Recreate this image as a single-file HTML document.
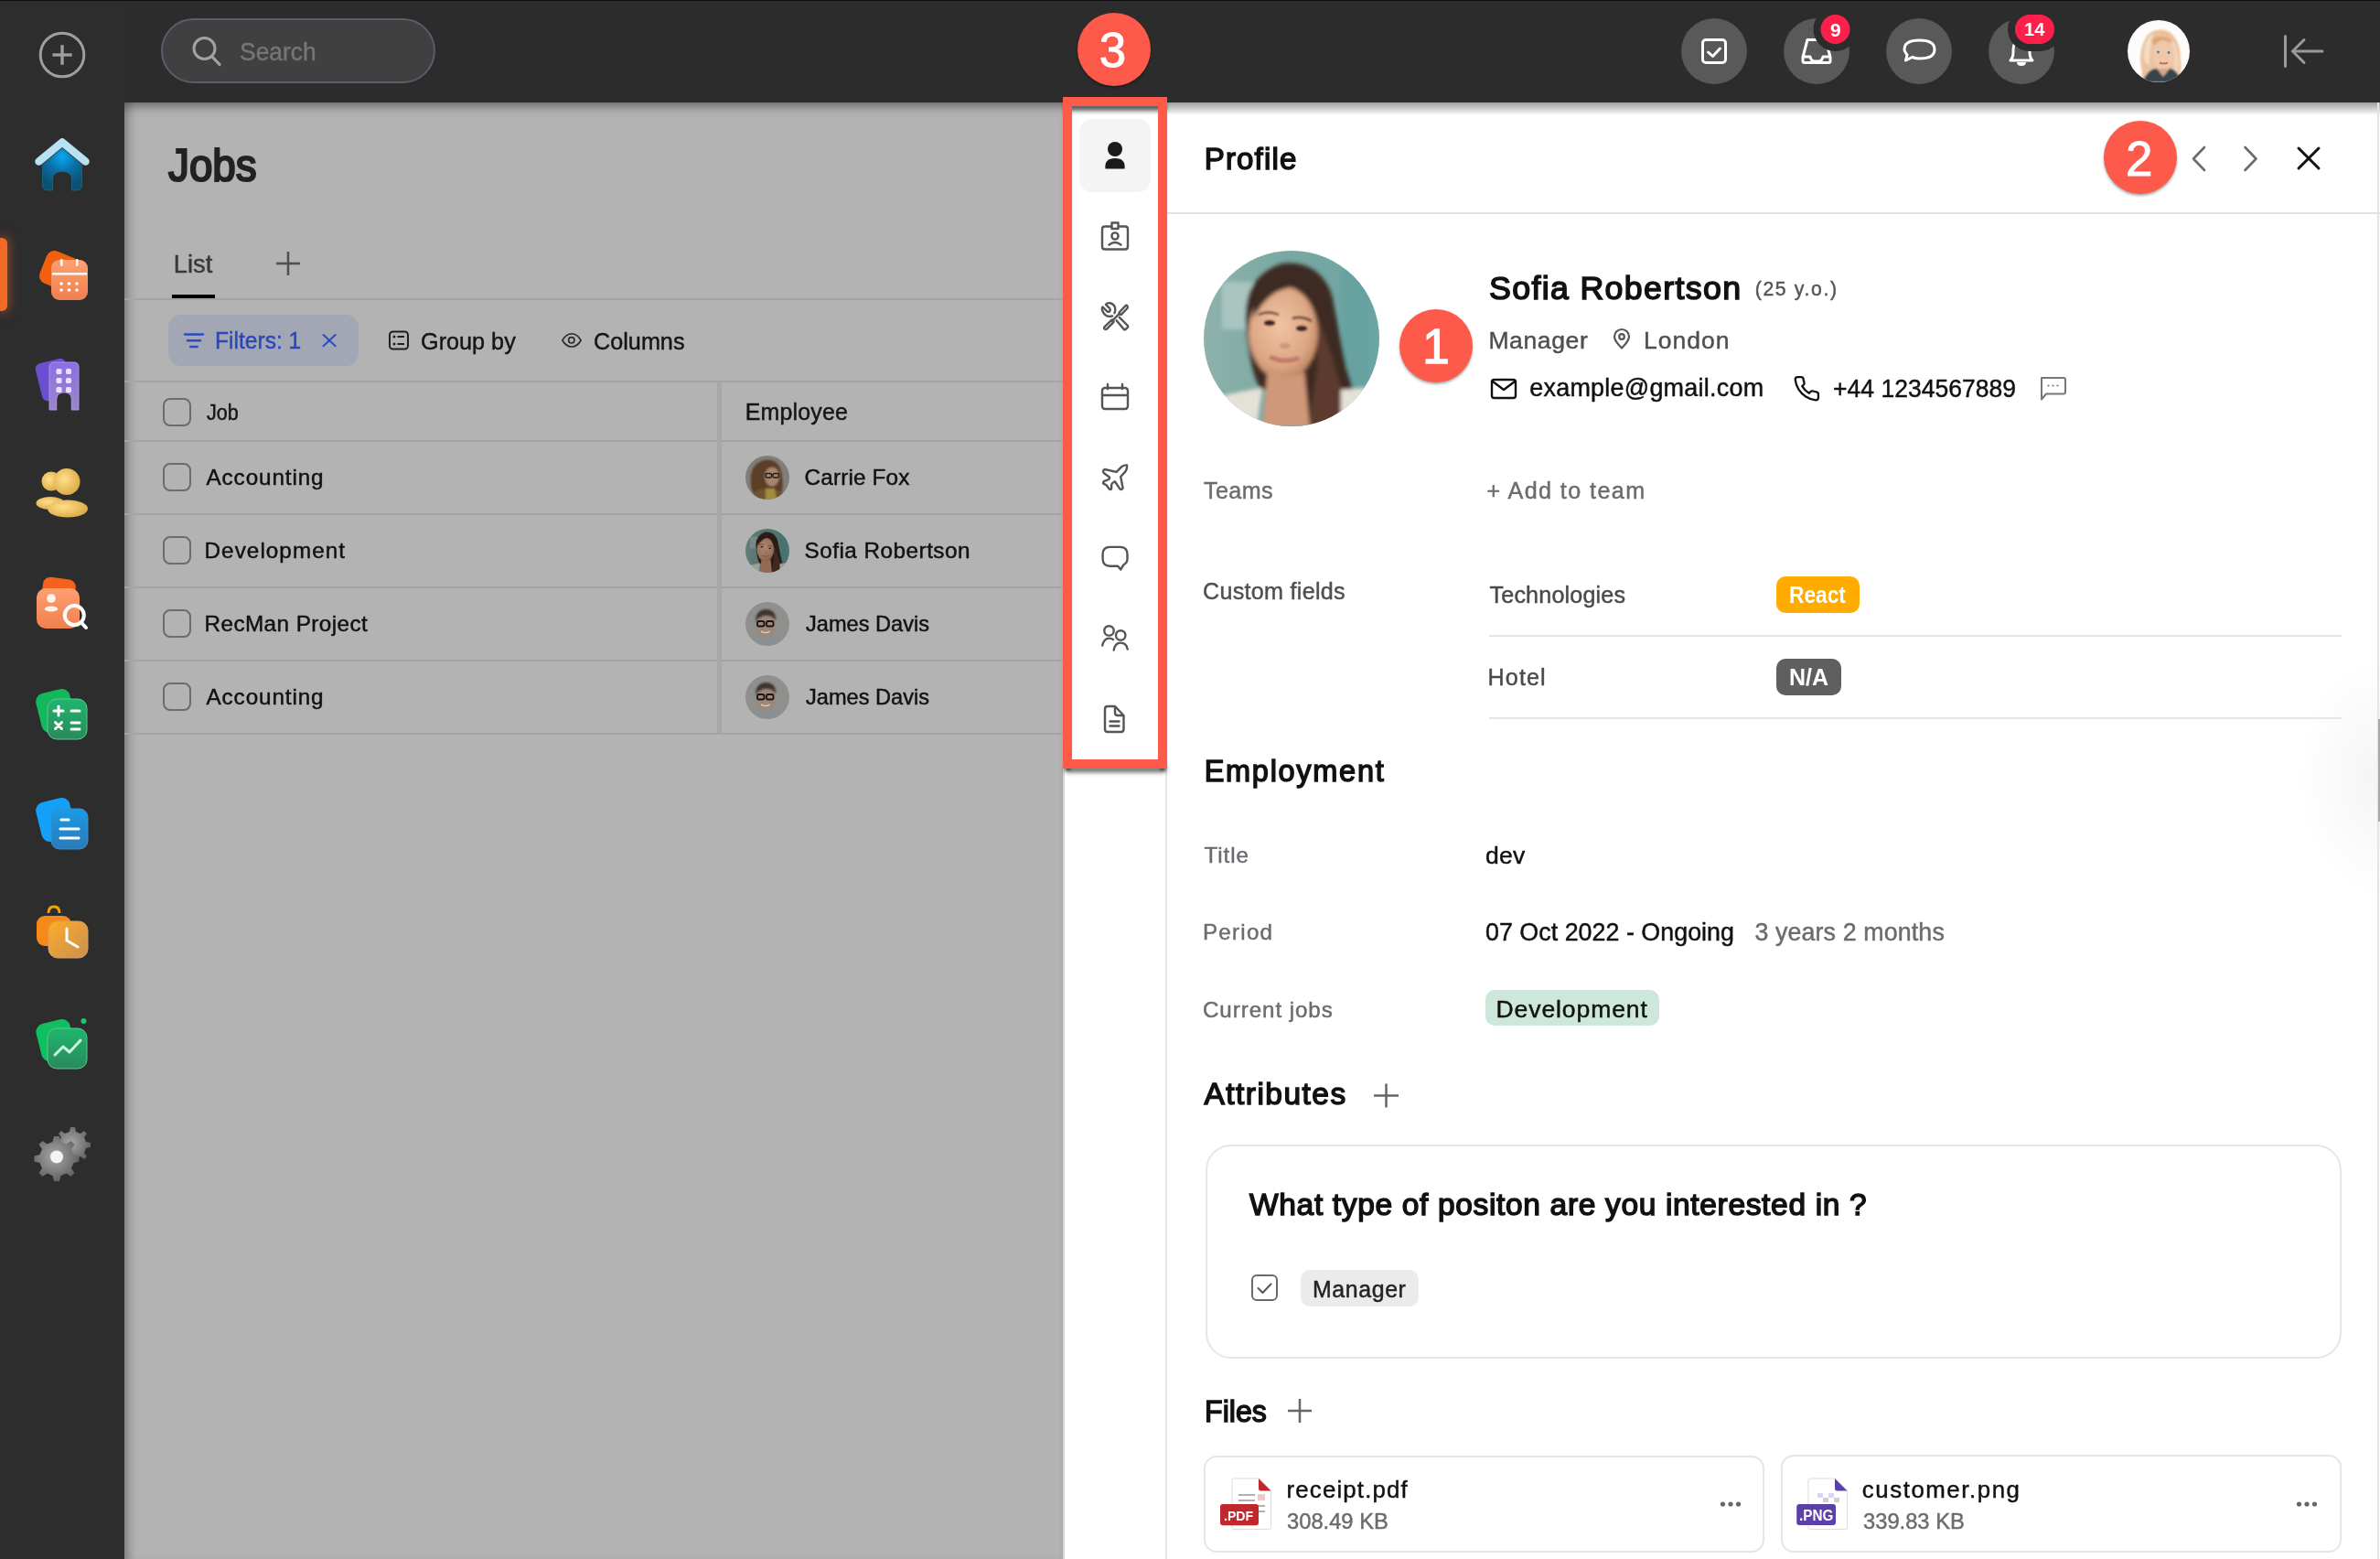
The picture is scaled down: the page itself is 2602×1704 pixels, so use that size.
<!DOCTYPE html>
<html><head><meta charset="utf-8">
<style>
html,body{margin:0;padding:0;width:2602px;height:1704px;overflow:hidden;background:#fff;font-family:"Liberation Sans",sans-serif;}
.a{position:absolute;box-sizing:border-box;}
.t{position:absolute;white-space:pre;font-family:"Liberation Sans",sans-serif;}
svg{position:absolute;overflow:visible;}
</style></head><body>
<!-- top bar & sidebar -->
<div class="a" style="left:0;top:0;width:2602px;height:112px;background:#2c2c2c;"></div>
<div class="a" style="left:0;top:0;width:2602px;height:1px;background:#0c0c0c;"></div>
<div class="a" style="left:0;top:1px;width:136px;height:1703px;background:#2d2d2d;"></div>
<!-- main gray -->
<div class="a" style="left:136px;top:112px;width:1026px;height:1592px;background:#b3b3b3;box-shadow:inset 0 12px 12px -8px rgba(0,0,0,.42), inset 12px 0 12px -8px rgba(0,0,0,.3);"></div>

<!-- search -->
<div class="a" style="left:176px;top:20.3px;width:300px;height:71.2px;border:2px solid #5c5c6c;border-radius:36px;background:#404040;"></div>
<svg style="left:0;top:0" width="1" height="1"><circle cx="223.5" cy="53" r="11.5" fill="none" stroke="#a3a3a3" stroke-width="3"/><line x1="232" y1="62" x2="240" y2="70.5" stroke="#a3a3a3" stroke-width="3.2" stroke-linecap="round"/></svg>
<!-- plus circle -->
<svg style="left:0;top:0" width="1" height="1"><circle cx="68" cy="60" r="23.8" fill="none" stroke="#9e9e9e" stroke-width="3"/><line x1="57.5" y1="60" x2="78.7" y2="60" stroke="#9e9e9e" stroke-width="3.4"/><line x1="68" y1="49.2" x2="68" y2="70.8" stroke="#9e9e9e" stroke-width="3.4"/></svg>

<!-- sidebar app icons -->
<svg style="left:0;top:0" width="1" height="1">
 <defs>
  <linearGradient id="gHome" x1="0" y1="0" x2="0" y2="1"><stop offset="0" stop-color="#12b4ff"/><stop offset=".55" stop-color="#0a7fc0"/><stop offset="1" stop-color="#0b4e6e"/></linearGradient>
  <linearGradient id="gOr" x1="0" y1="0" x2="0" y2="1"><stop offset="0" stop-color="#ffa070"/><stop offset="1" stop-color="#f08050"/></linearGradient>
  <linearGradient id="gPur" x1="0" y1="0" x2="0" y2="1"><stop offset="0" stop-color="#8b6ee6"/><stop offset="1" stop-color="#9a86c8"/></linearGradient>
  <radialGradient id="gYel" cx=".4" cy=".4" r=".7"><stop offset="0" stop-color="#ffe08a"/><stop offset="1" stop-color="#d9a440"/></radialGradient>
  <linearGradient id="gGrn" x1="0" y1="0" x2="0" y2="1"><stop offset="0" stop-color="#1fb56e"/><stop offset="1" stop-color="#2a8a5a"/></linearGradient>
  <linearGradient id="gBlu" x1="0" y1="0" x2="0" y2="1"><stop offset="0" stop-color="#1a9be8"/><stop offset="1" stop-color="#2a7ab8"/></linearGradient>
  <linearGradient id="gTime" x1="0" y1="0" x2="1" y2="1"><stop offset="0" stop-color="#ffab2a"/><stop offset="1" stop-color="#c89050"/></linearGradient>
  <radialGradient id="gGear" cx=".45" cy=".45" r=".6"><stop offset="0" stop-color="#a8a8a8"/><stop offset="1" stop-color="#5e5e5e"/></radialGradient>
 </defs>
 <!-- home -->
 <radialGradient id="gHome2" cx=".5" cy=".2" r=".75"><stop offset="0" stop-color="#0aa8f4"/><stop offset=".5" stop-color="#0a6fa6"/><stop offset="1" stop-color="#0b5070"/></radialGradient>
 <path d="M46.5 180 L68 162 L89.5 180 L89.5 202 Q89.5 208 83.5 208 L78.5 208 L78.5 196 Q78.5 187.5 68 187.5 Q57.5 187.5 57.5 196 L57.5 208 L52.5 208 Q46.5 208 46.5 202 Z" fill="url(#gHome2)" stroke="#1b6a8a" stroke-width=".8"/>
 <path d="M42.5 176.5 L68 155.5 L93.5 176.5" fill="none" stroke="#b8e2f2" stroke-width="8.5" stroke-linecap="round" stroke-linejoin="round"/>
 <!-- calendar -->
 <rect x="46" y="277" width="38" height="38" rx="9" transform="rotate(22 65 296)" fill="#f0600e"/>
 <rect x="56" y="284" width="40" height="44" rx="9" fill="url(#gOr)"/>
 <rect x="57" y="298" width="38" height="2.6" fill="#fff" opacity=".9"/>
 <rect x="66" y="283" width="2.6" height="8" rx="1.3" fill="#fff"/><rect x="83" y="283" width="2.6" height="8" rx="1.3" fill="#fff"/>
 <g fill="#fff"><circle cx="67" cy="310" r="1.8"/><circle cx="75.5" cy="310" r="1.8"/><circle cx="84" cy="310" r="1.8"/><circle cx="67" cy="317" r="1.8"/><circle cx="75.5" cy="317" r="1.8"/><circle cx="84" cy="317" r="1.8"/></g>
 <!-- building -->
 <rect x="42" y="394" width="34" height="42" rx="6" transform="rotate(-14 59 415)" fill="#6a4fd0"/>
 <path d="M54 401 Q54 396 59 396 L81 396 Q86 396 86 401 L86 448 L78 448 L78 436 Q78 429 70 429 Q62 429 62 436 L62 448 L54 448 Z" fill="url(#gPur)" stroke="#a898e0" stroke-width="1"/>
 <path d="M62.5 448 L62.5 436 Q62.5 429.5 70 429.5 Q77.5 429.5 77.5 436 L77.5 448 Z" fill="#2d2d2d"/>
 <g fill="#eadfff"><rect x="61.5" y="403" width="6" height="6" rx="1.5"/><rect x="72" y="403" width="6" height="6" rx="1.5"/><rect x="61.5" y="413" width="6" height="6" rx="1.5"/><rect x="72" y="413" width="6" height="6" rx="1.5"/><rect x="61.5" y="423" width="6" height="6" rx="1.5"/><rect x="72" y="423" width="6" height="6" rx="1.5"/></g>
 <!-- people -->
 <circle cx="56" cy="526" r="10.5" fill="url(#gYel)"/>
 <ellipse cx="55" cy="550" rx="15.5" ry="7" fill="url(#gYel)"/>
 <circle cx="73" cy="526.5" r="14.5" fill="url(#gYel)"/>
 <ellipse cx="74" cy="556" rx="22" ry="9.5" fill="url(#gYel)"/>
 <!-- recruiting -->
 <rect x="46" y="632" width="36" height="30" rx="8" transform="rotate(8 64 647)" fill="#f4621c"/>
 <rect x="40" y="643" width="47" height="44" rx="10" fill="url(#gOr)"/>
 <circle cx="56" cy="654" r="4.8" fill="#fff" opacity=".9"/><ellipse cx="56" cy="665.5" rx="7.3" ry="3" fill="#fff" opacity=".9"/>
 <circle cx="81.3" cy="672.6" r="10.5" fill="none" stroke="#fff" stroke-width="4"/><line x1="88.5" y1="680" x2="94" y2="686" stroke="#fff" stroke-width="4" stroke-linecap="round"/>
 <!-- calc -->
 <rect x="42" y="755" width="38" height="44" rx="9" transform="rotate(-14 61 777)" fill="#14b85c"/>
 <rect x="52" y="764" width="43" height="44" rx="10" fill="url(#gGrn)" stroke="#5cc890" stroke-width="1"/>
 <g stroke="#fff" stroke-width="3" stroke-linecap="round" fill="none"><path d="M59 777 h10 M64 772 v10 M78 777 h9 M60.5 789.5 l7 7 M67.5 789.5 l-7 7 M78 790 h9 M78 797 h9"/></g>
 <!-- docs -->
 <rect x="42" y="874" width="38" height="44" rx="9" transform="rotate(-14 61 896)" fill="#12a0f8"/>
 <rect x="56" y="884" width="40" height="44" rx="9" fill="url(#gBlu)" stroke="#3a90c8" stroke-width="1"/>
 <g stroke="#fff" stroke-width="3" stroke-linecap="round"><path d="M67 896 h8 M66 906 h20 M66 916 h20"/></g>
 <!-- time -->
 <path d="M53 998 Q53 991 59 991 Q65 991 65 998" fill="none" stroke="#f6a500" stroke-width="2.8"/>
 <rect x="40" y="1001" width="38" height="33" rx="9" fill="#f68a18"/>
 <rect x="53" y="1007" width="43" height="40" rx="10" fill="url(#gTime)" stroke="#d0a070" stroke-width="1"/>
 <path d="M73 1015 v13 l12 7" fill="none" stroke="#fff" stroke-width="3" stroke-linecap="round"/>
 <!-- chart -->
 <rect x="42" y="1116" width="38" height="42" rx="9" transform="rotate(-14 61 1137)" fill="#10c060"/>
 <rect x="52" y="1124" width="43" height="44" rx="10" fill="url(#gGrn)" stroke="#5cc890" stroke-width="1"/>
 <path d="M60 1153 l9 -9 l7 6 l12 -13" fill="none" stroke="#c8f5dc" stroke-width="3" stroke-linecap="round" stroke-linejoin="round"/>
 <circle cx="91.5" cy="1116" r="3" fill="#10d060"/>
 <!-- gear -->
 <g fill="url(#gGear)">
  <path d="M77 1232 l5 0 l1 5 l5 2 l4 -3 l3 3 l-3 4 l2 5 l5 1 l0 5 l-5 1 l-2 5 l3 4 l-3 3 l-4 -3 l-5 2 l-1 5 l-5 0 l-1 -5 l-5 -2 l-4 3 l-3 -3 l3 -4 l-2 -5 l-5 -1 l0 -5 l5 -1 l2 -5 l-3 -4 l3 -3 l4 3 l5 -2 z"/>
  <path d="M59 1242 l6 0 l1.5 6 l6 2.5 l5 -3.5 l4 4 l-3.5 5 l2.5 6 l6 1.5 l0 6 l-6 1.5 l-2.5 6 l3.5 5 l-4 4 l-5 -3.5 l-6 2.5 l-1.5 6 l-6 0 l-1.5 -6 l-6 -2.5 l-5 3.5 l-4 -4 l3.5 -5 l-2.5 -6 l-6 -1.5 l0 -6 l6 -1.5 l2.5 -6 l-3.5 -5 l4 -4 l5 3.5 l6 -2.5 z"/>
 </g>
 <circle cx="62" cy="1264.5" r="7" fill="#f4f4f4"/>
</svg>
<!-- active indicator -->
<div class="a" style="left:0;top:260px;width:8px;height:80px;background:#f26a28;border-radius:0 6px 6px 0;box-shadow:0 0 12px 2px rgba(242,106,40,.45);"></div>

<!-- tabs -->
<svg style="left:0;top:0" width="1" height="1"><line x1="302" y1="288" x2="328" y2="288" stroke="#505050" stroke-width="2.6"/><line x1="315" y1="275" x2="315" y2="301" stroke="#505050" stroke-width="2.6"/></svg>
<div class="a" style="left:136px;top:326px;width:1026px;height:2px;background:#a4a4a4;"></div>
<div class="a" style="left:188px;top:322px;width:47px;height:4px;background:#000;"></div>

<!-- filter bar -->
<div class="a" style="left:184.4px;top:344.4px;width:207.4px;height:55.4px;border-radius:14px;background:#a3a7b5;"></div>
<svg style="left:0;top:0" width="1" height="1"><g stroke="#2b4bbf" stroke-width="2.4" stroke-linecap="round"><line x1="202" y1="365.5" x2="222" y2="365.5"/><line x1="205" y1="372.3" x2="219" y2="372.3"/><line x1="208.3" y1="379" x2="215.7" y2="379"/></g>
<g stroke="#2b4bbf" stroke-width="2" stroke-linecap="round"><line x1="353.5" y1="366" x2="366.7" y2="378.2"/><line x1="366.7" y1="366" x2="353.5" y2="378.2"/></g>
<rect x="426" y="362.5" width="20" height="19" rx="3.5" fill="none" stroke="#1f1f1f" stroke-width="2"/>
<g fill="#1f1f1f"><circle cx="431" cy="368" r="1.5"/><circle cx="431" cy="376" r="1.5"/></g>
<g stroke="#1f1f1f" stroke-width="2"><line x1="434.5" y1="368" x2="442" y2="368"/><line x1="434.5" y1="376" x2="442" y2="376"/></g>
<path d="M614.8 372 Q619 364.8 625 364.8 Q631 364.8 635.2 372 Q631 379 625 379 Q619 379 614.8 372 Z" fill="none" stroke="#2a2a2a" stroke-width="1.6" stroke-linejoin="round"/><circle cx="624.8" cy="371.8" r="3.2" fill="none" stroke="#2a2a2a" stroke-width="1.6"/>
</svg>
<div class="a" style="left:136px;top:415.8px;width:1026px;height:2px;background:#a4a4a4;"></div>

<!-- table lines -->
<div class="a" style="left:136px;top:480.8px;width:1026px;height:2px;background:#a4a4a4;"></div>
<div class="a" style="left:136px;top:560.8px;width:1026px;height:2px;background:#a4a4a4;"></div>
<div class="a" style="left:136px;top:640.8px;width:1026px;height:2px;background:#a4a4a4;"></div>
<div class="a" style="left:136px;top:720.8px;width:1026px;height:2px;background:#a4a4a4;"></div>
<div class="a" style="left:136px;top:800.8px;width:1026px;height:2px;background:#a4a4a4;"></div>
<div class="a" style="left:784px;top:417px;width:5px;height:384px;background:#a8a8a8;"></div>
<!-- checkboxes -->
<div class="a" style="left:177.5px;top:434.6px;width:31px;height:31px;border:2.2px solid #6c6c6c;border-radius:8px;"></div>
<div class="a" style="left:177.5px;top:506.2px;width:31px;height:31px;border:2.2px solid #6c6c6c;border-radius:8px;"></div>
<div class="a" style="left:177.5px;top:586.2px;width:31px;height:31px;border:2.2px solid #6c6c6c;border-radius:8px;"></div>
<div class="a" style="left:177.5px;top:666.2px;width:31px;height:31px;border:2.2px solid #6c6c6c;border-radius:8px;"></div>
<div class="a" style="left:177.5px;top:746.2px;width:31px;height:31px;border:2.2px solid #6c6c6c;border-radius:8px;"></div>

<!-- small avatars -->
<svg style="left:0;top:0" width="1" height="1"><defs>
 <filter id="sb" x="-20%" y="-20%" width="140%" height="140%"><feGaussianBlur stdDeviation="0.9"/></filter>
 <filter id="bb" x="-20%" y="-20%" width="140%" height="140%"><feGaussianBlur stdDeviation="2.2"/></filter>
 <filter id="ub" x="-20%" y="-20%" width="140%" height="140%"><feGaussianBlur stdDeviation="1.2"/></filter>
</defs></svg>
<svg style="left:815px;top:498px" width="48" height="48" viewBox="0 0 48 48">
 <defs><clipPath id="cav"><circle cx="24" cy="24" r="24"/></clipPath></defs>
 <g clip-path="url(#cav)"><rect width="48" height="48" fill="#7f7e78"/>
 <g filter="url(#sb)">
 <path d="M6 30 Q4 10 20 5 Q34 3 38 14 Q42 26 40 40 L30 44 L12 44 Q6 40 6 30 Z" fill="#5c3d26"/>
 <ellipse cx="29" cy="23" rx="8" ry="10.5" fill="#a78670"/>
 <path d="M4 48 Q10 36 20 36 L36 38 Q44 42 44 48 Z" fill="#6e5236"/>
 <path d="M22 36 L32 36 L34 48 L22 48 Z" fill="#a48a3e"/>
 </g>
 <g stroke="#1e1e1e" stroke-width="1.4" fill="none"><rect x="22" y="19.5" width="6.5" height="4.5" rx="1.6"/><rect x="30" y="19.5" width="6.5" height="4.5" rx="1.6"/></g></g>
</svg>
<svg style="left:815px;top:578px" width="48" height="48" viewBox="0 0 192 192">
 <defs><clipPath id="cav2"><circle cx="96" cy="96" r="96"/></clipPath></defs>
 <g clip-path="url(#cav2)"><use href="#bigav"/><rect width="192" height="192" fill="#000" opacity=".3"/></g>
</svg>
<svg style="left:815px;top:658px" width="48" height="48" viewBox="0 0 48 48">
 <defs><clipPath id="cav3"><circle cx="24" cy="24" r="24"/></clipPath></defs>
 <g clip-path="url(#cav3)"><rect width="48" height="48" fill="#8f8f8d"/>
 <g filter="url(#sb)">
 <ellipse cx="22" cy="25" rx="10" ry="13" fill="#a08676"/>
 <path d="M11 22 Q11 8 23 8 Q34 9 33 21 Q30 14 22 15 Q14 16 11 22 Z" fill="#40342c"/>
 <path d="M10 48 Q14 40 24 40 Q34 40 40 48 Z" fill="#8a9098"/>
 </g>
 <g stroke="#151515" stroke-width="1.8" fill="none"><rect x="13" y="21" width="7.5" height="5.5" rx="1.8"/><rect x="23" y="21" width="7.5" height="5.5" rx="1.8"/></g>
 <path d="M17 32 Q22 35 27 32" stroke="#e0d8d0" stroke-width="1.2" fill="none"/></g>
</svg>
<svg style="left:815px;top:738px" width="48" height="48" viewBox="0 0 48 48">
 <g clip-path="url(#cav3)"><rect width="48" height="48" fill="#8f8f8d"/>
 <g filter="url(#sb)">
 <ellipse cx="22" cy="25" rx="10" ry="13" fill="#a08676"/>
 <path d="M11 22 Q11 8 23 8 Q34 9 33 21 Q30 14 22 15 Q14 16 11 22 Z" fill="#40342c"/>
 <path d="M10 48 Q14 40 24 40 Q34 40 40 48 Z" fill="#8a9098"/>
 </g>
 <g stroke="#151515" stroke-width="1.8" fill="none"><rect x="13" y="21" width="7.5" height="5.5" rx="1.8"/><rect x="23" y="21" width="7.5" height="5.5" rx="1.8"/></g>
 <path d="M17 32 Q22 35 27 32" stroke="#e0d8d0" stroke-width="1.2" fill="none"/></g>
</svg>

<!-- icon sidebar + profile panel -->
<div class="a" style="left:1162px;top:112px;width:1440px;height:1592px;background:#fff;"></div>
<div class="a" style="left:1162px;top:112px;width:1.5px;height:1592px;background:#d6d6d6;"></div>
<div class="a" style="left:1273.5px;top:112px;width:2px;height:1592px;background:#e6e6e6;"></div>
<div class="a" style="left:1162px;top:112px;width:1440px;height:14px;background:linear-gradient(rgba(0,0,0,.38),rgba(0,0,0,0));"></div>
<div class="a" style="left:2480px;top:700px;width:122px;height:300px;background:radial-gradient(ellipse 90px 130px at 122px 150px, rgba(0,0,0,.045), rgba(0,0,0,0));"></div>
<div class="a" style="left:2599px;top:112px;width:2px;height:1592px;background:#e4e4e4;"></div>
<div class="a" style="left:2600px;top:786px;width:2px;height:112px;background:#a8a8a8;"></div>
<div class="a" style="left:1276px;top:232px;width:1326px;height:1.6px;background:#e2e2e2;"></div>
<!-- active tab bg -->
<div class="a" style="left:1180px;top:130px;width:78px;height:80px;border-radius:14px;background:#f4f4f4;"></div>
<svg style="left:0;top:0" width="1" height="1">
 <circle cx="1219" cy="163" r="8" fill="#1a1a1a"/>
 <path d="M1208.5 184.5 Q1207 173 1219 173 Q1231 173 1229.5 184.5 Z" fill="#1a1a1a"/>
 <g fill="none" stroke="#555" stroke-width="2.4" stroke-linecap="round" stroke-linejoin="round">
  <!-- id badge -->
  <path d="M1215 247.5 h-7 q-3 0 -3 3 v19 q0 3 3 3 h22 q3 0 3 -3 v-19 q0 -3 -3 -3 h-7"/>
  <rect x="1215.5" y="243.5" width="7" height="6.5"/>
  <circle cx="1219" cy="258" r="3.6"/>
  <path d="M1212.5 267.5 q6.5 -5 13 0"/>
  <!-- tools -->
  <g transform="translate(1190,310)">
   <path d="M26.2 35.4 Q19 37.5 15.6 30.5 Q14.2 27.5 15.5 25.5 L20.5 30.5 Q22.5 31.5 23.6 29.6 Q24.2 28 23 26.8 L19 22.8 Q20.5 20.8 23.5 21.2 Q27.5 22 29 26 Q29.8 29 28.5 32.2"/>
   <path d="M33.8 36.8 L43 46 Q43.6 47 42.8 47.9 L40.5 50 Q39.6 50.7 38.6 49.8 L30.6 40.2"/>
   <path d="M33.8 31.2 L40.4 24.2 Q41.6 23.3 42.6 24.6 Q43.3 25.8 42.4 27 L36 33.6 Q34.8 34.2 33.8 33.2 Q33.2 32.2 33.8 31.2 Z"/>
   <path d="M34 32.6 L25.6 41"/>
   <path d="M25.2 39.8 L17.2 47.6 Q16.6 48.8 17.6 49.6 Q18.8 50.6 20 49.6 L27.4 42.2 Q28 41 27 40 Q26 39.2 25.2 39.8 Z"/>
  </g>
  <!-- calendar -->
  <rect x="1205" y="424" width="28" height="23" rx="3"/>
  <path d="M1205 432 h28 M1211 420 v5 M1227 420 v5"/>
  <!-- plane -->
  <g transform="translate(1190,490)">
   <path d="M42 18.5 Q38.5 17.8 35.8 20.6 L30.6 25.8 L17.8 23 Q16.2 23.4 16 25.4 Q16.2 26.6 17.4 27.6 L22.6 31.2 Q23.6 32.6 22.2 34 L17.4 35.8 Q15.6 37 16.4 38.6 L19.6 40.2 L22.8 44.6 Q24 45.6 25 44.4 L25.2 39.6 Q25.6 37.8 28.8 36.2 L34.4 44.4 Q36 45.8 37.6 43.6 L35.2 31 L40.4 25.4 Q42.6 21.8 42 18.5 Z"/>
  </g>
  <!-- chat -->
  <g transform="translate(1190,580)">
   <path d="M23.5 17.9 H34.5 Q42.5 17.9 42.5 26 V31 Q42.5 35 38.5 37.2 L35.2 42.5 L32.2 38.7 H23.5 Q15.6 38.7 15.6 30.5 V26 Q15.6 17.9 23.5 17.9 Z"/>
  </g>
  <!-- people -->
  <circle cx="1212.5" cy="689.4" r="5.2"/><circle cx="1225.2" cy="694.4" r="5.2"/>
  <path d="M1205.2 705.6 Q1207 697.6 1212.7 697.6 Q1215.2 697.6 1217 699"/>
  <path d="M1217.7 710.6 Q1219 702.6 1225.2 702.6 Q1231.5 702.6 1232.7 709.6"/>
  <!-- doc -->
  <path d="M1211 772 h8 l9.5 10 v15 q0 3 -3 3 h-14.5 q-3 0 -3 -3 v-22 q0 -3 3 -3 z M1219 772 v7 q0 3 3 3 h6.5 M1213.5 788.5 h10 M1213.5 793.5 h10"/>
 </g>
</svg>
<!-- red annotation box -->
<div class="a" style="left:1162px;top:106px;width:114px;height:10px;box-shadow:0.5px 6px 5px -2px rgba(0,0,0,.62);"></div>
<div class="a" style="left:1162px;top:830px;width:114px;height:10px;box-shadow:0.5px 6px 5px -2px rgba(0,0,0,.62);"></div>
<div class="a" style="left:1162px;top:106px;width:10px;height:734px;box-shadow:0.5px 4px 3px -2px rgba(0,0,0,.5);"></div>
<div class="a" style="left:1266px;top:106px;width:10px;height:734px;box-shadow:0.5px 4px 3px -2px rgba(0,0,0,.5);"></div>
<div class="a" style="left:1162px;top:106px;width:114px;height:10px;background:#fe5a4a;"></div>
<div class="a" style="left:1162px;top:830px;width:114px;height:10px;background:#fe5a4a;"></div>
<div class="a" style="left:1162px;top:106px;width:10px;height:734px;background:#fe5a4a;"></div>
<div class="a" style="left:1266px;top:106px;width:10px;height:734px;background:#fe5a4a;"></div>


<!-- top right icons -->
<div class="a" style="left:1838px;top:20px;width:72px;height:72px;border-radius:50%;background:#595959;"></div>
<div class="a" style="left:1950px;top:20px;width:72px;height:72px;border-radius:50%;background:#595959;"></div>
<div class="a" style="left:2062px;top:20px;width:72px;height:72px;border-radius:50%;background:#595959;"></div>
<div class="a" style="left:2174px;top:20px;width:72px;height:72px;border-radius:50%;background:#595959;"></div>
<svg style="left:0;top:0" width="1" height="1">
 <g fill="none" stroke="#fff" stroke-width="3" stroke-linecap="round" stroke-linejoin="round">
  <rect x="1861.5" y="43.5" width="25" height="25" rx="3.5"/>
  <path d="M1867.5 57 l5 4.5 l8 -8.5"/>
  <path d="M1976 43.5 h20 l5 19 v4 q0 2 -2 2 h-26 q-2 0 -2 -2 v-4 z M1971 62 h8 q1 5 5 5 h4 q4 0 5 -5 h8"/>
  <path d="M2085 60 q-3 -4 -3 -6 q0 -10 16.5 -10 q16.5 0 16.5 10 q0 10 -16.5 10 q-4 0 -8 -1.5 l-7 3.5 z"/>
  <path d="M2198 66 q3 -3 3 -9 v-3 q0 -9 9 -10 q9 1 9 10 v3 q0 6 3 9 z"/>
 </g>
 <path d="M2205 68 h10 q0 4 -5 4 q-5 0 -5 -4 z" fill="#fff"/>
 <!-- badge 9 -->
 <circle cx="2006.5" cy="32" r="24" fill="#2c2c2c"/>
 <circle cx="2006.5" cy="32" r="16" fill="#ff1f4b"/>
 <!-- badge 14 -->
 <rect x="2195" y="8" width="59" height="48" rx="24" fill="#2c2c2c"/>
 <rect x="2203" y="16" width="43" height="32" rx="16" fill="#ff1f4b"/>
 <!-- collapse -->
 <g stroke="#9a9a9a" stroke-width="3" stroke-linecap="round" fill="none"><line x1="2498.5" y1="39.5" x2="2498.5" y2="72.5"/><path d="M2539 56 h-32 M2519 43.5 l-12.5 12.5 l12.5 12.5"/></g>
</svg>
<!-- user avatar -->
<svg style="left:2326px;top:22px" width="68" height="68" viewBox="0 0 68 68">
 <defs><clipPath id="cu"><circle cx="34" cy="34" r="34"/></clipPath></defs>
 <g clip-path="url(#cu)"><rect width="68" height="68" fill="#fefcfa"/>
 <g filter="url(#ub)">
  <path d="M16 56 Q10 34 22 16 Q34 7 46 13 Q58 22 58 44 Q60 56 54 66 L20 66 Q14 62 16 56 Z" fill="#ebc29c"/>
  <path d="M18 44 Q16 24 28 14 Q24 30 24 50 Z" fill="#f4dcc4"/>
  <path d="M50 22 Q58 36 55 58 L50 58 Q52 40 47 28 Z" fill="#f2d6ba"/>
  <path d="M26 22 Q36 14 48 22 L44 28 L30 28 Z" fill="#d9a678"/>
  <ellipse cx="39" cy="38" rx="12" ry="16" fill="#efc8aa"/>
  <path d="M16 68 Q22 54 30 53 L48 53 Q56 56 58 68 Z" fill="#36454c"/>
  <path d="M32 53 L39 62 L46 53 Z" fill="#d8a888"/>
 </g>
 <g fill="#4a7a98"><circle cx="33.5" cy="35" r="1.4"/><circle cx="45" cy="35.5" r="1.4"/></g>
 <path d="M35 46.5 Q39.5 48.5 44 46.5" stroke="#c86a6a" stroke-width="2" fill="none"/>
 </g>
</svg>

<!-- badge 3 -->
<div class="a" style="left:1178px;top:14px;width:80px;height:80px;border-radius:50%;background:#fd5a4b;box-shadow:0 2px 3px rgba(0,0,0,.35);"></div>

<!-- profile header nav -->
<div class="a" style="left:2300px;top:132px;width:80px;height:80px;border-radius:50%;background:#fd5a4b;box-shadow:0 2px 3px rgba(0,0,0,.35);"></div>
<svg style="left:0;top:0" width="1" height="1">
 <g fill="none" stroke="#6b6b6b" stroke-width="2.6" stroke-linecap="round" stroke-linejoin="round"><path d="M2410 161 l-12 12.5 l12 12.5"/><path d="M2454.5 161 l12 12.5 l-12 12.5"/></g>
 <g stroke="#111" stroke-width="3" stroke-linecap="round"><line x1="2513" y1="162" x2="2535" y2="184"/><line x1="2535" y1="162" x2="2513" y2="184"/></g>
</svg>

<!-- big avatar -->
<svg style="left:1316px;top:274px" width="192" height="192" viewBox="0 0 192 192">
 <defs><clipPath id="cbig"><circle cx="96" cy="96" r="96"/></clipPath>
 <linearGradient id="gbg" x1="0" y1="0" x2="1" y2="0"><stop offset="0" stop-color="#8fb2ab"/><stop offset=".45" stop-color="#79a8a3"/><stop offset="1" stop-color="#6ba5a4"/></linearGradient>
 <radialGradient id="gface" cx=".45" cy=".42" r=".62"><stop offset="0" stop-color="#f0c4a4"/><stop offset=".7" stop-color="#dca683"/><stop offset="1" stop-color="#b9825f"/></radialGradient>
 <g id="bigav">
 <rect width="192" height="192" fill="url(#gbg)"/>
 <g filter="url(#bb)">
  <rect x="20" y="34" width="34" height="52" fill="#b2cbc6" opacity=".8"/>
  <rect x="150" y="20" width="30" height="160" fill="#64a09f" opacity=".6"/>
  <path d="M46 80 Q42 28 86 14 Q126 10 140 48 Q148 88 156 128 Q170 165 162 192 L114 192 L104 150 L62 152 Q50 130 46 80 Z" fill="#3d2921"/>
  <path d="M124 70 Q140 112 150 150 Q156 176 144 192 L114 192 Q120 160 124 128 Z" fill="#5c3b2d"/>
  <ellipse cx="87" cy="90" rx="38" ry="51" fill="url(#gface)"/>
  <path d="M54 74 Q56 32 96 26 Q128 30 132 74 Q122 44 100 40 Q72 40 54 74 Z" fill="#3d2921"/>
  <path d="M70 130 Q88 146 110 132 L116 192 L64 192 Z" fill="#cf9878"/>
  <path d="M0 192 L4 164 Q34 154 64 150 L58 192 Z" fill="#e6e1d8"/>
  <path d="M150 152 L178 150 L192 192 L150 192 Z" fill="#e6e1d8"/>
 </g>
 <g filter="url(#ub)">
  <path d="M60 70 Q70 65 82 70" stroke="#5a3a30" stroke-width="2.4" fill="none" opacity=".8"/>
  <path d="M97 74 Q108 71 118 77" stroke="#5a3a30" stroke-width="2.4" fill="none" opacity=".8"/>
  <ellipse cx="72" cy="79" rx="6" ry="2.8" fill="#3a2420"/><ellipse cx="107" cy="85" rx="6" ry="2.8" fill="#3a2420"/>
  <ellipse cx="89" cy="104" rx="6" ry="3" fill="#b98063" opacity=".55"/>
  <path d="M74 117 Q88 123 102 118" stroke="#c07a6c" stroke-width="5" fill="none" stroke-linecap="round"/>
 </g>
 </g>
 </defs>
 <g clip-path="url(#cbig)"><use href="#bigav"/></g>
</svg>
<!-- badge 1 -->
<div class="a" style="left:1530px;top:338px;width:80px;height:80px;border-radius:50%;background:#fd5a4b;box-shadow:0 2px 3px rgba(0,0,0,.35);"></div>

<!-- contact icons -->
<svg style="left:0;top:0" width="1" height="1">
 <g fill="none" stroke="#555" stroke-width="2.2" stroke-linecap="round" stroke-linejoin="round">
  <path d="M1773 380.5 q-8 -8 -8 -12.5 a8 8 0 0 1 16 0 q0 4.5 -8 12.5 z"/><circle cx="1773" cy="368" r="2.8"/>
 </g>
 <g fill="none" stroke="#111" stroke-width="2.4" stroke-linecap="round" stroke-linejoin="round">
  <rect x="1631" y="415" width="26" height="20" rx="2.5"/><path d="M1632 417 l12 9 l12 -9"/>
  <path transform="translate(1960,409.5) scale(1.27)" stroke-width="1.8" d="M22 16.92v3a2 2 0 0 1-2.18 2 19.79 19.79 0 0 1-8.63-3.07 19.5 19.5 0 0 1-6-6 19.79 19.79 0 0 1-3.07-8.67A2 2 0 0 1 4.11 2h3a2 2 0 0 1 2 1.72 12.84 12.84 0 0 0 .7 2.810 2 2 0 0 1-.45 2.11L8.09 9.91a16 16 0 0 0 6 6l1.27-1.27a2 2 0 0 1 2.11-.45 12.84 12.84 0 0 0 2.81.7A2 2 0 0 1 22 16.92z"/>
 </g>
 <g fill="none" stroke="#777" stroke-width="2" stroke-linejoin="round"><path d="M2232 413 h24 q2 0 2 2 v13.5 q0 2 -2 2 h-19 l-5 6 v-21.5 q0 -2 0 -2 z"/></g>
 <g fill="#777"><circle cx="2239.5" cy="421.5" r="1.1"/><circle cx="2244.5" cy="421.5" r="1.1"/><circle cx="2249.5" cy="421.5" r="1.1"/></g>
</svg>

<!-- custom fields -->
<div class="a" style="left:1942px;top:630px;width:91px;height:40px;border-radius:10px;background:#ffab00;"></div>
<div class="a" style="left:1628px;top:694px;width:932px;height:2px;background:#e6e6e6;"></div>
<div class="a" style="left:1942px;top:720px;width:71px;height:40px;border-radius:10px;background:#5f5f61;"></div>
<div class="a" style="left:1628px;top:784px;width:932px;height:2px;background:#e6e6e6;"></div>
<!-- development tag -->
<div class="a" style="left:1623.5px;top:1082.3px;width:190.5px;height:38.7px;border-radius:10px;background:#cde8db;"></div>
<!-- attributes -->
<svg style="left:0;top:0" width="1" height="1"><g stroke="#666" stroke-width="2.5"><line x1="1502" y1="1197.5" x2="1529" y2="1197.5"/><line x1="1515.5" y1="1184.5" x2="1515.5" y2="1210.5"/></g>
<g stroke="#666" stroke-width="2.5"><line x1="1408" y1="1542" x2="1434" y2="1542"/><line x1="1421" y1="1529" x2="1421" y2="1555"/></g></svg>
<div class="a" style="left:1317.6px;top:1250.7px;width:1242.4px;height:234px;border:2px solid #e6e6e6;border-radius:28px;"></div>
<div class="a" style="left:1368px;top:1393.4px;width:29px;height:29px;border:2px solid #6a6a6a;border-radius:6px;"></div>
<svg style="left:0;top:0" width="1" height="1"><path d="M1375.5 1408 l5 5 l9 -9.5" fill="none" stroke="#555" stroke-width="2" stroke-linecap="round" stroke-linejoin="round"/></svg>
<div class="a" style="left:1422px;top:1387.8px;width:129px;height:39.8px;border-radius:10px;background:#ebebeb;"></div>

<!-- files -->
<div class="a" style="left:1316.3px;top:1590.8px;width:612.6px;height:106.2px;border:2px solid #e6e6e6;border-radius:14px;"></div>
<div class="a" style="left:1946.6px;top:1590.4px;width:613.4px;height:106.4px;border:2px solid #e6e6e6;border-radius:14px;"></div>
<svg style="left:0;top:0" width="1" height="1">
 <path d="M1347 1618 q0 -2 2 -2 h27.5 l13 13 v40.5 q0 2 -2 2 h-38.5 q-2 0 -2 -2 z" fill="#fff" stroke="#dcdcdc" stroke-width="1"/>
 <path d="M1376 1616 l13.5 13.5 h-11 q-2.5 0 -2.5 -2.5 z" fill="#c0282d"/>
 <g stroke="#999" stroke-width="1.5"><line x1="1354" y1="1634" x2="1372" y2="1634"/><line x1="1354" y1="1640" x2="1372" y2="1640"/><line x1="1375" y1="1646" x2="1383" y2="1646"/><line x1="1375" y1="1652" x2="1383" y2="1652"/></g>
 <rect x="1375" y="1633" width="8" height="7" fill="#f3c8c8"/>
 <rect x="1334" y="1644" width="42" height="23.2" rx="3" fill="#c0282d"/>
 <path d="M1977 1618 q0 -2 2 -2 h27.5 l13 13 v40.5 q0 2 -2 2 h-38.5 q-2 0 -2 -2 z" fill="#fff" stroke="#dcdcdc" stroke-width="1"/>
 <path d="M2006 1616 l13.5 13.5 h-11 q-2.5 0 -2.5 -2.5 z" fill="#5b40a8"/>
 <g fill="#dcd4f4"><rect x="1987" y="1632" width="6" height="5"/><rect x="1999" y="1632" width="6" height="5"/></g>
 <g fill="#cfcfcf"><rect x="1993" y="1637" width="6" height="5"/><rect x="2005" y="1637" width="6" height="5"/></g>
 <rect x="1964.2" y="1644" width="42.8" height="23" rx="3" fill="#5b40a8"/>
 <g fill="#666"><circle cx="1883.5" cy="1644" r="2.6"/><circle cx="1892" cy="1644" r="2.6"/><circle cx="1900.5" cy="1644" r="2.6"/></g>
 <g fill="#666"><circle cx="2513.5" cy="1644" r="2.6"/><circle cx="2522" cy="1644" r="2.6"/><circle cx="2530.5" cy="1644" r="2.6"/></g>
</svg>

<!--TEXTS-->
<div class="t" style="left:262.00px;top:41.93px;font-size:28.35px;line-height:28.35px;letter-spacing:0.000px;font-weight:normal;color:#767676;-webkit-text-stroke:0.45px #767676;transform:scaleX(0.9306);transform-origin:1.00px 0;">Search</div>
<div class="t" style="left:184.00px;top:156.02px;font-size:50.28px;line-height:50.28px;letter-spacing:0.000px;font-weight:normal;color:#222;-webkit-text-stroke:2.21px #222;transform:scaleX(0.9111);transform-origin:0.00px 0;">Jobs</div>
<div class="t" style="left:189.70px;top:275.26px;font-size:27.23px;line-height:27.23px;letter-spacing:0.069px;font-weight:normal;color:#383838;-webkit-text-stroke:0.45px #383838;">List</div>
<div class="t" style="left:234.80px;top:360.24px;font-size:25.7px;line-height:25.7px;letter-spacing:0.000px;font-weight:normal;color:#2a48b8;-webkit-text-stroke:0.45px #2a48b8;transform:scaleX(0.9563);transform-origin:2.00px 0;">Filters: 1</div>
<div class="t" style="left:460.00px;top:359.66px;font-size:26.4px;line-height:26.4px;letter-spacing:0.000px;font-weight:normal;color:#151515;-webkit-text-stroke:0.45px #151515;transform:scaleX(0.9552);transform-origin:1.00px 0;">Group by</div>
<div class="t" style="left:649.20px;top:359.66px;font-size:26.4px;line-height:26.4px;letter-spacing:0.000px;font-weight:normal;color:#151515;-webkit-text-stroke:0.45px #151515;transform:scaleX(0.9550);transform-origin:1.00px 0;">Columns</div>
<div class="t" style="left:225.50px;top:438.54px;font-size:24.02px;line-height:24.02px;letter-spacing:0.000px;font-weight:normal;color:#151515;-webkit-text-stroke:0.45px #151515;transform:scaleX(0.8993);transform-origin:0.00px 0;">Job</div>
<div class="t" style="left:814.70px;top:438.24px;font-size:24.86px;line-height:24.86px;letter-spacing:0.226px;font-weight:normal;color:#151515;-webkit-text-stroke:0.45px #151515;">Employee</div>
<div class="t" style="left:225.50px;top:509.51px;font-size:24.3px;line-height:24.3px;letter-spacing:0.878px;font-weight:normal;color:#111;-webkit-text-stroke:0.45px #111;">Accounting</div>
<div class="t" style="left:223.50px;top:589.71px;font-size:24.3px;line-height:24.3px;letter-spacing:1.039px;font-weight:normal;color:#111;-webkit-text-stroke:0.45px #111;">Development</div>
<div class="t" style="left:223.50px;top:669.71px;font-size:24.3px;line-height:24.3px;letter-spacing:0.416px;font-weight:normal;color:#111;-webkit-text-stroke:0.45px #111;">RecMan Project</div>
<div class="t" style="left:225.50px;top:749.71px;font-size:24.3px;line-height:24.3px;letter-spacing:0.878px;font-weight:normal;color:#111;-webkit-text-stroke:0.45px #111;">Accounting</div>
<div class="t" style="left:879.50px;top:509.51px;font-size:24.3px;line-height:24.3px;letter-spacing:0.160px;font-weight:normal;color:#111;-webkit-text-stroke:0.45px #111;">Carrie Fox</div>
<div class="t" style="left:879.50px;top:589.51px;font-size:24.3px;line-height:24.3px;letter-spacing:0.484px;font-weight:normal;color:#111;-webkit-text-stroke:0.45px #111;">Sofia Robertson</div>
<div class="t" style="left:880.50px;top:669.71px;font-size:24.3px;line-height:24.3px;letter-spacing:0.000px;font-weight:normal;color:#111;-webkit-text-stroke:0.45px #111;transform:scaleX(0.9704);transform-origin:0.00px 0;">James Davis</div>
<div class="t" style="left:880.50px;top:749.71px;font-size:24.3px;line-height:24.3px;letter-spacing:0.000px;font-weight:normal;color:#111;-webkit-text-stroke:0.45px #111;transform:scaleX(0.9704);transform-origin:0.00px 0;">James Davis</div>
<div class="t" style="left:1316.70px;top:157.36px;font-size:33.1px;line-height:33.1px;letter-spacing:1.140px;font-weight:normal;color:#111;-webkit-text-stroke:1.46px #111;">Profile</div>
<div class="t" style="left:1628.00px;top:297.75px;font-size:35.75px;line-height:35.75px;letter-spacing:1.337px;font-weight:normal;color:#111;-webkit-text-stroke:1.57px #111;">Sofia Robertson</div>
<div class="t" style="left:1918.70px;top:305.47px;font-size:21.23px;line-height:21.23px;letter-spacing:1.639px;font-weight:normal;color:#555;-webkit-text-stroke:0.45px #555;">(25 y.o.)</div>
<div class="t" style="left:1627.40px;top:358.84px;font-size:26.54px;line-height:26.54px;letter-spacing:0.620px;font-weight:normal;color:#4f4f4f;-webkit-text-stroke:0.45px #4f4f4f;">Manager</div>
<div class="t" style="left:1797.00px;top:358.84px;font-size:26.54px;line-height:26.54px;letter-spacing:0.985px;font-weight:normal;color:#4f4f4f;-webkit-text-stroke:0.45px #4f4f4f;">London</div>
<div class="t" style="left:1672.20px;top:410.99px;font-size:26.96px;line-height:26.96px;letter-spacing:0.244px;font-weight:normal;color:#111;-webkit-text-stroke:0.45px #111;">example@gmail.com</div>
<div class="t" style="left:2004.00px;top:411.28px;font-size:27.93px;line-height:27.93px;letter-spacing:0.000px;font-weight:normal;color:#111;-webkit-text-stroke:0.45px #111;transform:scaleX(0.9503);transform-origin:1.00px 0;">+44 1234567889</div>
<div class="t" style="left:1316.00px;top:524.01px;font-size:25.14px;line-height:25.14px;letter-spacing:0.391px;font-weight:normal;color:#6b6b70;-webkit-text-stroke:0.45px #6b6b70;">Teams</div>
<div class="t" style="left:1625.40px;top:524.01px;font-size:25.14px;line-height:25.14px;letter-spacing:1.417px;font-weight:normal;color:#6b6b70;-webkit-text-stroke:0.45px #6b6b70;">+ Add to team</div>
<div class="t" style="left:1315.00px;top:634.01px;font-size:25.14px;line-height:25.14px;letter-spacing:0.280px;font-weight:normal;color:#4f4f52;-webkit-text-stroke:0.45px #4f4f52;">Custom fields</div>
<div class="t" style="left:1628.50px;top:638.01px;font-size:25.14px;line-height:25.14px;letter-spacing:0.173px;font-weight:normal;color:#4a4a4a;-webkit-text-stroke:0.45px #4a4a4a;">Technologies</div>
<div class="t" style="left:1955.50px;top:638.01px;font-size:25.14px;line-height:25.14px;letter-spacing:0.000px;font-weight:bold;color:#fff;transform:scaleX(0.9036);transform-origin:1.00px 0;">React</div>
<div class="t" style="left:1626.50px;top:728.31px;font-size:25.14px;line-height:25.14px;letter-spacing:1.132px;font-weight:normal;color:#4a4a4a;-webkit-text-stroke:0.45px #4a4a4a;">Hotel</div>
<div class="t" style="left:1955.50px;top:728.01px;font-size:25.14px;line-height:25.14px;letter-spacing:0.000px;font-weight:bold;color:#fff;transform:scaleX(0.9970);transform-origin:1.00px 0;">N/A</div>
<div class="t" style="left:1316.70px;top:827.13px;font-size:32.54px;line-height:32.54px;letter-spacing:1.694px;font-weight:normal;color:#111;-webkit-text-stroke:1.43px #111;">Employment</div>
<div class="t" style="left:1316.50px;top:922.63px;font-size:24.16px;line-height:24.16px;letter-spacing:0.924px;font-weight:normal;color:#6b6b70;-webkit-text-stroke:0.45px #6b6b70;">Title</div>
<div class="t" style="left:1624.00px;top:921.74px;font-size:26.54px;line-height:26.54px;letter-spacing:0.245px;font-weight:normal;color:#111;-webkit-text-stroke:0.45px #111;">dev</div>
<div class="t" style="left:1315.00px;top:1006.83px;font-size:24.16px;line-height:24.16px;letter-spacing:1.242px;font-weight:normal;color:#6b6b70;-webkit-text-stroke:0.45px #6b6b70;">Period</div>
<div class="t" style="left:1624.00px;top:1005.91px;font-size:26.82px;line-height:26.82px;letter-spacing:0.032px;font-weight:normal;color:#111;-webkit-text-stroke:0.45px #111;">07 Oct 2022 - Ongoing</div>
<div class="t" style="left:1918.40px;top:1005.91px;font-size:26.82px;line-height:26.82px;letter-spacing:0.116px;font-weight:normal;color:#6b6b70;-webkit-text-stroke:0.45px #6b6b70;">3 years 2 months</div>
<div class="t" style="left:1315.00px;top:1091.83px;font-size:24.16px;line-height:24.16px;letter-spacing:0.928px;font-weight:normal;color:#6b6b70;-webkit-text-stroke:0.45px #6b6b70;">Current jobs</div>
<div class="t" style="left:1635.50px;top:1089.84px;font-size:26.54px;line-height:26.54px;letter-spacing:0.905px;font-weight:normal;color:#111;-webkit-text-stroke:0.45px #111;">Development</div>
<div class="t" style="left:1316.40px;top:1179.01px;font-size:33.52px;line-height:33.52px;letter-spacing:1.465px;font-weight:normal;color:#111;-webkit-text-stroke:1.47px #111;">Attributes</div>
<div class="t" style="left:1366.00px;top:1300.41px;font-size:33.52px;line-height:33.52px;letter-spacing:0.655px;font-weight:normal;color:#111;-webkit-text-stroke:1.47px #111;">What type of positon are you interested in ?</div>
<div class="t" style="left:1435.00px;top:1396.74px;font-size:24.86px;line-height:24.86px;letter-spacing:0.627px;font-weight:normal;color:#222;-webkit-text-stroke:0.45px #222;">Manager</div>
<div class="t" style="left:1316.50px;top:1526.34px;font-size:33.24px;line-height:33.24px;letter-spacing:0.000px;font-weight:normal;color:#111;-webkit-text-stroke:1.46px #111;transform:scaleX(0.9652);transform-origin:2.00px 0;">Files</div>
<div class="t" style="left:1406.60px;top:1616.42px;font-size:25.84px;line-height:25.84px;letter-spacing:1.147px;font-weight:normal;color:#111;-webkit-text-stroke:0.45px #111;">receipt.pdf</div>
<div class="t" style="left:1407.00px;top:1650.94px;font-size:24.02px;line-height:24.02px;letter-spacing:0.000px;font-weight:normal;color:#6b6b70;-webkit-text-stroke:0.45px #6b6b70;transform:scaleX(0.9879);transform-origin:0.00px 0;">308.49 KB</div>
<div class="t" style="left:2035.80px;top:1616.42px;font-size:25.84px;line-height:25.84px;letter-spacing:1.555px;font-weight:normal;color:#111;-webkit-text-stroke:0.45px #111;">customer.png</div>
<div class="t" style="left:2036.80px;top:1650.74px;font-size:24.02px;line-height:24.02px;letter-spacing:0.000px;font-weight:normal;color:#6b6b70;-webkit-text-stroke:0.45px #6b6b70;transform:scaleX(0.9879);transform-origin:0.00px 0;">339.83 KB</div>
<div class="t" style="left:1201.80px;top:28.34px;font-size:53px;line-height:53px;letter-spacing:0.000px;font-weight:normal;color:#fff;-webkit-text-stroke:0.45px #fff;-webkit-text-stroke:0.9px #fff;">3</div>
<div class="t" style="left:2324.00px;top:146.94px;font-size:53px;line-height:53px;letter-spacing:0.000px;font-weight:normal;color:#fff;-webkit-text-stroke:0.45px #fff;-webkit-text-stroke:0.9px #fff;">2</div>
<div class="t" style="left:1555.30px;top:351.94px;font-size:53px;line-height:53px;letter-spacing:0.000px;font-weight:normal;color:#fff;-webkit-text-stroke:0.45px #fff;-webkit-text-stroke:1.4px #fff;">1</div>
<div class="t" style="left:2000.90px;top:21.76px;font-size:21px;line-height:21px;letter-spacing:0.000px;font-weight:bold;color:#fff;">9</div>
<div class="t" style="left:2213.00px;top:21.88px;font-size:20.5px;line-height:20.5px;letter-spacing:0.000px;font-weight:bold;color:#fff;transform:scaleX(0.9821);transform-origin:1.00px 0;">14</div>
<div class="t" style="left:1338.30px;top:1649.57px;font-size:14.53px;line-height:14.53px;letter-spacing:0.000px;font-weight:bold;color:#fff;transform:scaleX(0.9730);transform-origin:0.00px 0;">.PDF</div>
<div class="t" style="left:1966.60px;top:1648.71px;font-size:15.92px;line-height:15.92px;letter-spacing:0.000px;font-weight:bold;color:#fff;transform:scaleX(0.9596);transform-origin:1.00px 0;">.PNG</div>
</body></html>
